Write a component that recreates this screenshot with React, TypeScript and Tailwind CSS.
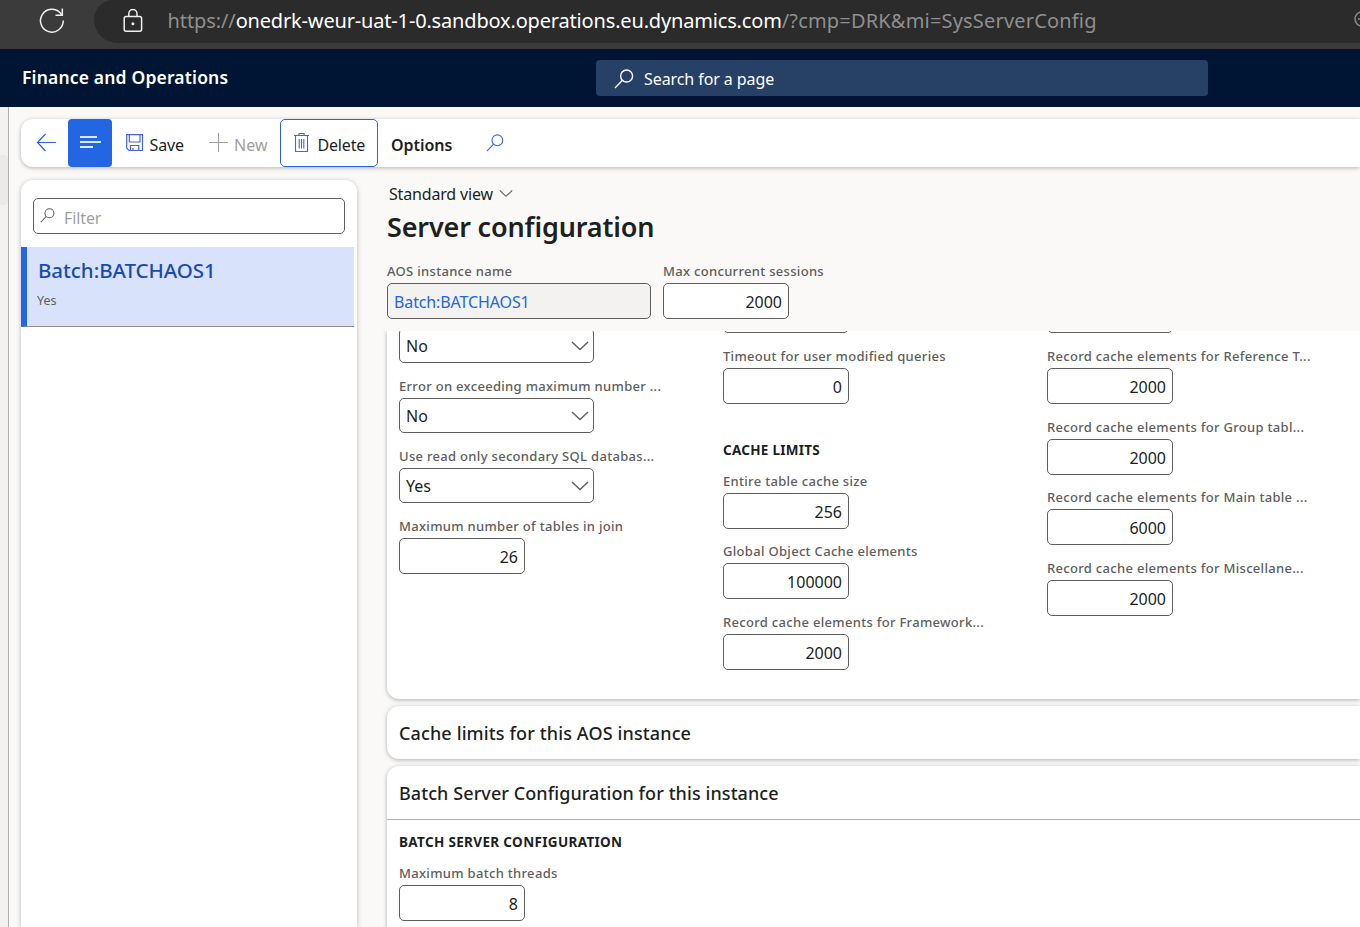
import type { ReactNode } from "react";

function SearchIcon({ className }: { className: string }) {
  return (
    <svg className={className} viewBox="0 0 20 20" fill="none" stroke="currentColor">
      <circle cx="12.6" cy="7" r="6" />
      <path d="M8.4 11.3L1 19" />
    </svg>
  );
}

function Chevron({ className }: { className: string }) {
  return (
    <svg className={className} viewBox="0 0 18 10" fill="none" stroke="currentColor" strokeWidth="1.4">
      <path d="M1 1l8 7.6L17 1" />
    </svg>
  );
}

function Field({ label, children }: { label: string; children: ReactNode }) {
  return (
    <div className="flex flex-col">
      <div className="h-5 text-[13px] leading-5 font-medium tracking-[0.31px] whitespace-nowrap text-[#605e5c]">{label}</div>
      <div className="pt-0.5">{children}</div>
    </div>
  );
}

function NumberBox({ value }: { value?: string }) {
  return (
    <div className="flex h-9 w-[126px] items-center justify-end rounded-[5px] border border-[#605e5c] bg-white px-1.5 pt-0.5 text-base">
      {value}
    </div>
  );
}

function SelectBox({ value }: { value: string }) {
  return (
    <div className="flex h-[35px] w-[195px] items-center justify-between rounded-[5px] border border-[#605e5c] bg-white pt-px pr-1 pl-1.5 text-base">
      {value}
      <Chevron className="mb-px h-[10px] w-[18px] text-[#605e5c]" />
    </div>
  );
}

function BrowserBar() {
  return (
    <div className="flex h-[49px] shrink-0 bg-[#3b3b3b]">
      <div className="w-[94px] pt-[7px] pl-[38px]">
        <svg className="h-7 w-7 text-[#f0f0f0]" viewBox="0 0 28 28" fill="none" stroke="currentColor" strokeWidth="1.5">
          <path d="M25.3 13.6A11.4 11.4 0 1 1 22.5 6.2L24 8" />
          <path d="M24.3 1.5V8.2H17.5" />
        </svg>
      </div>
      <div className="flex h-[43px] flex-1 items-center overflow-hidden rounded-bl-[24px] rounded-tl-[20px] bg-[#2b2b2b]">
        <svg className="ml-[29px] h-6 w-5 shrink-0 -translate-y-[1.5px] text-[#f0f0f0]" viewBox="0 0 20 24" fill="none" stroke="currentColor" strokeWidth="1.5">
          <rect x="1.2" y="8" width="17.4" height="14.8" rx="2" />
          <path d="M5.8 8V5.2a4 4 0 0 1 8.2 0V8" />
          <circle cx="9.9" cy="15.3" r="1.5" fill="currentColor" stroke="none" />
        </svg>
        <div className="mb-0.5 ml-[24.5px] w-[1185px] shrink-0 text-[20px] leading-7 tracking-[-0.1px] whitespace-nowrap text-[#8f8f8f]">
          https://<span className="tracking-[-0.17px] text-white">onedrk-weur-uat-1-0.sandbox.operations.eu.dynamics.com</span>
          <span className="tracking-[0.18px]">/?cmp=DRK&amp;mi=SysServerConfig</span>
        </div>
        <svg className="mb-1 h-5 w-5 shrink-0 text-[#8f8f8f]" viewBox="0 0 20 20" fill="none" stroke="currentColor" strokeWidth="1.4">
          <circle cx="9" cy="9" r="7" />
          <path d="M5 9h8" />
        </svg>
      </div>
    </div>
  );
}

function AppHeader() {
  return (
    <div className="flex h-[58px] shrink-0 items-center bg-[#001433] text-white">
      <div className="mb-0.5 w-[596px] pl-[22px] text-[17.5px] leading-6 font-semibold tracking-[0.17px]">Finance and Operations</div>
      <div className="flex h-9 w-[612px] items-center rounded-[4px] bg-[#264066]">
        <SearchIcon className="mt-0.5 ml-[18px] h-5 w-5 stroke-[1.4]" />
        <div className="ml-2.5 pt-px text-base leading-6 tracking-[-0.08px]">Search for a page</div>
      </div>
    </div>
  );
}

function Toolbar() {
  return (
    <div className="flex h-12 shrink-0 items-start rounded-l-xl bg-white shadow-[0_1px_4px_rgba(0,0,0,0.28)]">
      <svg className="mt-[14px] ml-[15px] h-5 w-5 text-[#2266e3]" viewBox="0 0 20 20" fill="none" stroke="currentColor" strokeWidth="1.2">
        <path d="M20 9.5H1.5M9.5 1L1.5 9.5L9.5 18" />
      </svg>
      <div className="ml-3 flex h-12 w-11 flex-col gap-[3px] rounded-[4px] bg-[#2266e3] pt-[17px] pl-3">
        <div className="h-0.5 w-[17px] bg-white/85" />
        <div className="h-0.5 w-[21px] bg-white/85" />
        <div className="h-0.5 w-[13px] bg-white/85" />
      </div>
      <div className="ml-3.5 flex">
        <svg className="mt-[15px] h-[18px] w-[18px] text-[#3f68e0]" viewBox="0 0 18 18" fill="none" stroke="currentColor" strokeWidth="1.2">
          <path d="M.7.7h15.8v15.8H3.1L.7 14.2z" />
          <path d="M3.3.7v7.3h10.7V.7M4.5 16.5v-5h8.2v5M7 16.5v-2.5" />
        </svg>
        <div className="ml-[5.5px] pt-[14px] text-base leading-6 tracking-[-0.1px]">Save</div>
      </div>
      <div className="ml-[25px] flex text-[#a19f9d]">
        <svg className="mt-[14px] h-5 w-5" viewBox="0 0 20 20" fill="none" stroke="currentColor" strokeWidth="1.1">
          <path d="M9.5 0v19M0 9.5h19" />
        </svg>
        <div className="ml-[5px] pt-[14px] text-base leading-6">New</div>
      </div>
      <div className="ml-[13px] flex h-12 w-[98px] rounded-[5px] border border-[#2266e3]">
        <svg className="mt-[13px] ml-[13px] h-5 w-4 text-[#3f68e0]" viewBox="0 0 16 20" fill="none" stroke="currentColor" strokeWidth="1.1">
          <path d="M0 2.5h15M5 2.5V.5h5v2M1.5 2.5v16h12v-16M5.2 6v9.5M7.5 6v9.5M9.8 6v9.5" />
        </svg>
        <div className="ml-[7px] pt-[13px] text-base leading-6 tracking-[-0.15px]">Delete</div>
      </div>
      <div className="ml-[12.5px] w-[95px] pt-[14px] text-base leading-6 font-semibold tracking-[-0.05px]">Options</div>
      <SearchIcon className="mt-[14.5px] h-[18px] w-[18px] stroke-[1.2] text-[#3f68e0]" />
    </div>
  );
}

function RecordList() {
  return (
    <div className="flex w-[336px] shrink-0 flex-col rounded-t-xl bg-white shadow-[0_1px_5px_rgba(0,0,0,0.25)]">
      <div className="mt-[18px] ml-3 flex h-9 w-[312px] rounded-[5px] border border-[#605e5c]">
        <SearchIcon className="mt-[9px] ml-[6px] h-[15px] w-[15px] stroke-[1.4] text-[#605e5c]" />
        <div className="ml-[9px] pt-[7px] text-base leading-6 tracking-[-0.1px] text-[#a19f9d]">Filter</div>
      </div>
      <div className="mt-[13px] flex h-20 w-[333px] flex-col border-b border-l-[6px] border-b-[#8a8f8d] border-l-[#2266e3] bg-[#d8e3fb] pl-2.5">
        <div className="pt-2 pl-px text-[20.5px] leading-[30px] font-medium tracking-[-0.05px] text-[#1a4bb0]">Batch:BATCHAOS1</div>
        <div className="pt-1.5 text-[12.5px] leading-5 text-[#605e5c]">Yes</div>
      </div>
    </div>
  );
}

function GeneralSection() {
  return (
    <div className="flex h-[368px] shrink-0 rounded-bl-xl bg-white pl-3 shadow-[0_1px_4px_rgba(0,0,0,0.3)]">
      <div className="-mt-[3px] flex w-[324px] shrink-0 flex-col gap-[13px]">
        <SelectBox value="No" />
        <Field label="Error on exceeding maximum number ...">
          <SelectBox value="No" />
        </Field>
        <Field label="Use read only secondary SQL databas...">
          <SelectBox value="Yes" />
        </Field>
        <Field label="Maximum number of tables in join">
          <NumberBox value="26" />
        </Field>
      </div>
      <div className="-mt-[34px] flex w-[324px] shrink-0 flex-col">
        <NumberBox />
        <div className="mt-[13px]">
          <Field label="Timeout for user modified queries">
            <NumberBox value="0" />
          </Field>
        </div>
        <div className="mt-[36px] mb-[11px] h-5 text-[13.5px] leading-5 font-bold tracking-[0.27px] text-[#201f1e]">CACHE LIMITS</div>
        <div className="flex flex-col gap-[12.4px]">
          <Field label="Entire table cache size">
            <NumberBox value="256" />
          </Field>
          <Field label="Global Object Cache elements">
            <NumberBox value="100000" />
          </Field>
          <Field label="Record cache elements for Framework...">
            <NumberBox value="2000" />
          </Field>
        </div>
      </div>
      <div className="-mt-[34px] flex flex-col gap-[13px]">
        <NumberBox />
        <Field label="Record cache elements for Reference T...">
          <NumberBox value="2000" />
        </Field>
        <div className="flex flex-col gap-[12.4px]">
          <Field label="Record cache elements for Group tabl...">
            <NumberBox value="2000" />
          </Field>
          <Field label="Record cache elements for Main table ...">
            <NumberBox value="6000" />
          </Field>
          <Field label="Record cache elements for Miscellane...">
            <NumberBox value="2000" />
          </Field>
        </div>
      </div>
    </div>
  );
}

function Details() {
  return (
    <div className="flex min-w-0 flex-1 flex-col">
      <div className="flex h-[151px] shrink-0 flex-col pl-[30px]">
        <div className="mt-[2px] ml-[2px] flex h-6 items-center text-base leading-6 tracking-[-0.17px]">
          Standard view
          <Chevron className="mb-0.5 ml-[6px] h-[9px] w-[14px] text-[#605e5c]" />
        </div>
        <div className="mt-px h-[41px] text-[27px] leading-10 font-semibold tracking-[-0.15px]">Server configuration</div>
        <div className="mt-[13px] flex gap-3">
          <div className="w-[264px]">
            <Field label="AOS instance name">
              <div className="flex h-9 items-center rounded-[5px] border border-[#605e5c] bg-[#f3f2f1] px-1.5 pt-0.5 text-base tracking-[-0.12px] text-[#2266e3]">
                Batch:BATCHAOS1
              </div>
            </Field>
          </div>
          <Field label="Max concurrent sessions">
            <NumberBox value="2000" />
          </Field>
        </div>
      </div>
      <div className="flex min-h-0 flex-1 flex-col gap-[7px] overflow-hidden pl-[30px]">
        <GeneralSection />
        <div className="h-[53px] shrink-0 rounded-l-xl bg-white pl-3 text-[18px] leading-[54px] font-medium tracking-[0.13px] shadow-[0_1px_4px_rgba(0,0,0,0.3)]">
          Cache limits for this AOS instance
        </div>
        <div className="h-[200px] shrink-0 rounded-tl-xl bg-white shadow-[0_1px_4px_rgba(0,0,0,0.3)]">
          <div className="h-[54px] border-b border-[#b3b0ad] pl-3 text-[18px] leading-[54px] font-medium tracking-[0.08px]">
            Batch Server Configuration for this instance
          </div>
          <div className="pt-3 pl-3">
            <div className="mb-[11px] h-5 text-[13.5px] leading-5 font-bold tracking-[0.34px] text-[#201f1e]">BATCH SERVER CONFIGURATION</div>
            <Field label="Maximum batch threads">
              <NumberBox value="8" />
            </Field>
          </div>
        </div>
      </div>
    </div>
  );
}

export default function App() {
  return (
    <div className="flex h-[927px] w-[1360px] flex-col overflow-hidden bg-[#faf9f8] font-['Noto_Sans',sans-serif] text-[#201f1e]">
      <BrowserBar />
      <AppHeader />
      <div className="flex min-h-0 flex-1">
        <div className="w-[9px] shrink-0 border-r border-[#b3b0ad] bg-[#f3f2f1] pt-12">
          <div className="h-[50px] rounded-r-[4px] bg-[#ebeae9]" />
        </div>
        <div className="flex min-w-0 flex-1 flex-col gap-[13px] pt-3 pl-3">
          <Toolbar />
          <div className="flex min-h-0 flex-1">
            <RecordList />
            <Details />
          </div>
        </div>
      </div>
    </div>
  );
}
